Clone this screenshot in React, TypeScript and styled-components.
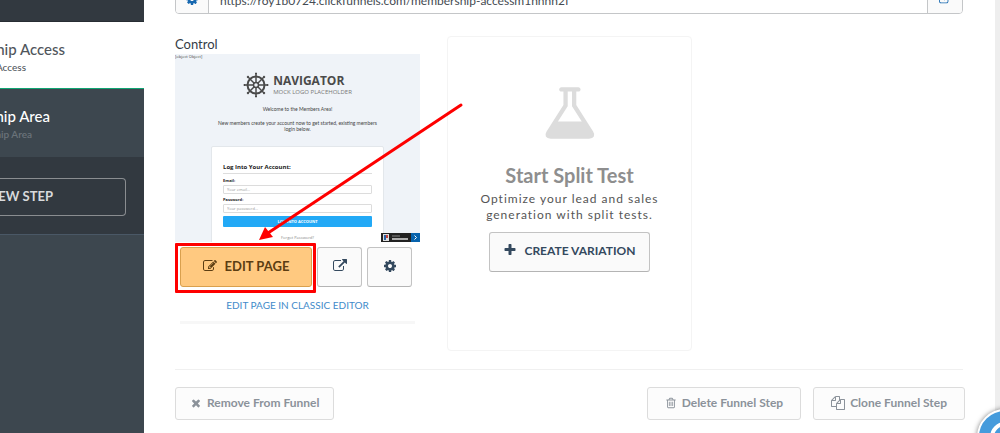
import React from "react";
import styled, { createGlobalStyle, css } from "styled-components";

const Global = createGlobalStyle`
  * { box-sizing: border-box; }
  html, body { margin: 0; padding: 0; overflow: hidden; }
  body { background: #fff; color: #3c4650; font-family: Lato, "Liberation Sans", sans-serif; font-size: 14px; }
  button, input { font-family: inherit; margin: 0; }
`;

const paths = {
  flask: "M1527 1447q56 89 21.5 153t-140.5 64h-1152q-106 0-140.5-64t21.5-153l503-793v-399h-64q-26 0-45-19t-19-45 19-45 45-19h512q26 0 45 19t19 45-19 45-45 19h-64v399zm-779-725l-272 430h712l-272-430-20-31v-436h-128v436z",
  external: "M1408 928v320q0 119-84.5 203.5t-203.5 84.5h-832q-119 0-203.5-84.5t-84.5-203.5v-832q0-119 84.5-203.5t203.5-84.5h704q14 0 23 9t9 23v64q0 14-9 23t-23 9h-704q-66 0-113 47t-47 113v832q0 66 47 113t113 47h832q66 0 113-47t47-113v-320q0-14 9-23t23-9h64q14 0 23 9t9 23zm384-864v512q0 26-19 45t-45 19-45-19l-176-176-652 652q-10 10-23 10t-23-10l-114-114q-10-10-10-23t10-23l652-652-176-176q-19-19-19-45t19-45 45-19h512q26 0 45 19t19 45z",
  cog: "M1152 896q0-106-75-181t-181-75-181 75-75 181 75 181 181 75 181-75 75-181zm512-109v222q0 12-8 23t-20 13l-185 28q-19 54-39 91 35 50 107 138 10 12 10 25t-9 23q-27 37-99 108t-94 71q-12 0-26-9l-138-108q-44 23-91 38-16 136-29 186-7 28-36 28h-222q-14 0-24.5-8.500t-11.500-21.500l-28-184q-49-16-90-37l-141 107q-10 9-25 9-14 0-25-11-126-114-165-168-7-10-7-23 0-12 8-23 15-21 51-66.500t54-70.500q-27-50-41-99l-183-27q-13-2-21-12.500t-8-23.500v-222q0-12 8-23t19-13l186-28q14-46 39-92-40-57-107-138-10-12-10-24 0-10 9-23 26-36 98.500-107.500t94.500-71.500q13 0 26 10l138 107q44-23 91-38 16-136 29-186 7-28 36-28h222q14 0 24.500 8.500t11.500 21.500l28 184q49 16 90 37l142-107q9-9 24-9 13 0 25 10 129 119 165 170 7 8 7 22 0 12-8 23-15 21-51 66.500t-54 70.500q26 50 41 98l183 28q13 2 21 12.500t8 23.500z",
  edit: "M888 1184l116-116-152-152-116 116v56h96v96h56zm440-720q-16-16-33 1l-350 350q-17 17-1 33t33-1l350-350q17-17 1-33zm80 594v190q0 119-84.5 203.500t-203.500 84.500h-832q-119 0-203.500-84.500t-84.500-203.500v-832q0-119 84.500-203.500t203.500-84.500h832q63 0 117 25 15 7 18 23 3 17-9 29l-49 49q-14 14-32 8-23-6-45-6h-832q-66 0-113 47t-47 113v832q0 66 47 113t113 47h832q66 0 113-47t47-113v-126q0-13 9-22l64-64q15-15 35-7t20 29zm-96-738l288 288-672 672h-288v-288zm444 132l-92 92-288-288 92-92q28-28 68-28t68 28l152 152q28 28 28 68t-28 68z",
  plus: "M1600 736v192q0 40-28 68t-68 28h-416v416q0 40-28 68t-68 28h-192q-40 0-68-28t-28-68v-416h-416q-40 0-68-28t-28-68v-192q0-40 28-68t68-28h416v-416q0-40 28-68t68-28h192q40 0 68 28t28 68v416h416q40 0 68 28t28 68z",
  times: "M1490 1322q0 40-28 68l-136 136q-28 28-68 28t-68-28l-294-294-294 294q-28 28-68 28t-68-28l-136-136q-28-28-28-68t28-68l294-294-294-294q-28-28-28-68t28-68l136-136q28-28 68-28t68 28l294 294 294-294q28-28 68-28t68 28l136 136q28 28 28 68t-28 68l-294 294 294 294q28 28 28 68z",
  trash: "M704 736v576q0 14-9 23t-23 9h-64q-14 0-23-9t-9-23v-576q0-14 9-23t23-9h64q14 0 23 9t9 23zm256 0v576q0 14-9 23t-23 9h-64q-14 0-23-9t-9-23v-576q0-14 9-23t23-9h64q14 0 23 9t9 23zm256 0v576q0 14-9 23t-23 9h-64q-14 0-23-9t-9-23v-576q0-14 9-23t23-9h64q14 0 23 9t9 23zm128 724v-948h-896v948q0 22 7 40.500t14.500 27 10.500 8.500h832q3 0 10.500-8.500t14.500-27 7-40.500zm-672-1076h448l-48-117q-7-9-17-11h-317q-10 2-17 11zm928 32v64q0 14-9 23t-23 9h-96v948q0 83-47 143.500t-113 60.500h-832q-66 0-113-58.500t-47-141.500v-952h-96q-14 0-23-9t-9-23v-64q0-14 9-23t23-9h309l70-167q15-37 54-63t79-26h320q40 0 79 26t54 63l70 167h309q14 0 23 9t9 23z",
  files: "M1696 384q40 0 68 28t28 68v1216q0 40-28 68t-68 28h-960q-40 0-68-28t-28-68v-288h-544q-40 0-68-28t-28-68v-672q0-40 20-88t48-76l408-408q28-28 76-48t88-20h416q40 0 68 28t28 68v328q68-40 128-40h416zm-544 213l-299 299h299v-299zm-640-384l-299 299h299v-299zm196 647l316-316v-416h-384v416q0 40-28 68t-68 28h-416v640h512v-256q0-40 20-88t48-76zm956 804v-1152h-384v416q0 40-28 68t-68 28h-416v640h896z",
};

const Icon = ({ name, size = 14 }: { name: keyof typeof paths; size?: number }) => (
  <svg width={size} height={size} viewBox="0 0 1792 1792" fill="currentColor" aria-hidden="true">
    <path d={paths[name]} />
  </svg>
);

const Page = styled.div`
  display: flex;
  min-height: 100vh;
`;

/* Sidebar */
const Sidebar = styled.aside`
  flex: 0 0 144px;
  display: flex;
  flex-direction: column;
  background: #3d474f;
`;
const SideTop = styled.div`
  height: 22px;
  background: #323940;
  border-bottom: 1px solid #272d33;
`;
const Step = styled.a<{ $active?: boolean }>`
  display: flex;
  flex-direction: column;
  height: ${(p) => (p.$active ? 67 : 68)}px;
  padding-top: 18px;
  overflow: hidden;
  text-decoration: none;
  color: ${(p) => (p.$active ? "#50565c" : "#fff")};
  background: ${(p) => (p.$active ? "#fff" : "#3d474f")};
  border-bottom: ${(p) => (p.$active ? "1px solid #0fa573" : "0")};
`;
const StepLine = styled.span<{ $end: number; $small?: boolean; $dim?: boolean }>`
  display: flex;
  justify-content: flex-end;
  width: ${(p) => p.$end}px;
  white-space: nowrap;
  font-size: ${(p) => (p.$small ? 10 : 15)}px;
  line-height: 18px;
  font-weight: ${(p) => (p.$dim ? 600 : 500)};
  color: ${(p) => (p.$dim ? "#6b737a" : "inherit")};
`;
const AddStep = styled.div`
  padding: 21px 18px 18px 0;
  background: #323940;
  border-bottom: 1px solid #4a5866;
`;
const AddButton = styled.button`
  display: flex;
  width: 100%;
  height: 38px;
  align-items: center;
  justify-content: flex-start;
  padding: 0 0 2px;
  background: transparent;
  border: 1px solid #8a8d90;
  border-left: 0;
  border-radius: 0 4px 4px 0;
  overflow: hidden;
  span {
    display: flex;
    justify-content: flex-end;
    width: 53px;
    white-space: nowrap;
    font-size: 13px;
    font-weight: 700;
    color: #d8dadc;
  }
`;

/* Main column */
const Main = styled.main`
  flex: 1;
  min-width: 0;
  padding: 0 30px 0 31px;
  border-right: 5px solid #eee;
`;
const UrlBar = styled.div`
  display: flex;
  height: 28px;
  margin: -14px 2px 0 0;
  border: 1px solid #c4c6c8;
  border-radius: 4px;
  overflow: hidden;
  color: #1768b0;
`;
const Addon = styled.button<{ $side: "left" | "right" }>`
  display: flex;
  flex: 0 0 ${(p) => (p.$side === "left" ? 33 : 35)}px;
  align-items: center;
  justify-content: center;
  padding: 0 0 2px;
  color: inherit;
  background: #fafafa;
  border: 0;
  ${(p) => (p.$side === "left" ? "border-right" : "border-left")}: 1px solid #c4c6c8;
`;
const UrlInput = styled.input`
  flex: 1;
  min-width: 0;
  padding: 0 11px;
  border: 0;
  font-size: 12px;
  color: #454b52;
`;
const Variants = styled.div`
  display: flex;
  align-items: flex-start;
  gap: 27px;
  padding-top: 22px;
`;
const Control = styled.section`
  position: relative;
  width: 245px;
`;
const ControlTitle = styled.h2`
  margin: 0;
  padding-bottom: 2px;
  font-size: 13px;
  font-weight: 400;
  line-height: 16px;
  color: #343c46;
`;

/* Page thumbnail */
const Preview = styled.div`
  position: relative;
  height: 188px;
  overflow: hidden;
  background: #eff3f8;
  font-family: "Open Sans", "Noto Sans", sans-serif;
  font-size: 4px;
  line-height: 6px;
  color: #444;
`;
const Stray = styled.div`
  font-size: 4px;
  line-height: 5px;
`;
const Brand = styled.div`
  display: flex;
  align-items: center;
  justify-content: center;
  gap: 4px;
  margin-top: 13px;
  color: #4a4a4a;
`;
const BrandText = styled.div`
  display: flex;
  flex-direction: column;
  strong { font-size: 12px; line-height: 14px; }
  span { font-size: 6px; line-height: 8px; color: #777; }
`;
const Welcome = styled.p`
  margin: 8px 40px 6px;
  text-align: center;
  font-family: Lato, sans-serif;
  font-size: 5px;
`;
const LoginCard = styled.div`
  display: flex;
  flex-direction: column;
  margin: 14px 36px 0;
  height: 110px;
  padding: 16px 11px 0;
  background: #fff;
  border: 1px solid #e3e7eb;
  border-radius: 2px;
`;
const LoginTitle = styled.h3`
  margin: 0 0 4px;
  padding-bottom: 2px;
  border-bottom: 1px solid #ddd;
  font-size: 6px;
  line-height: 8px;
  color: #222;
`;
const MiniLabel = styled.label`
  display: flex;
  flex-direction: column;
  gap: 1px;
  margin-bottom: 3px;
  font-weight: 700;
  color: #222;
`;
const MiniInput = styled.input`
  width: 100%;
  height: 9px;
  padding: 0 3px;
  border: 1px solid #dcdcdc;
  border-radius: 1px;
  font-size: 4px;
  &::placeholder { color: #999; }
`;
const MiniSubmit = styled.button`
  height: 11px;
  padding: 0;
  background: #22a9f6;
  border: 0;
  border-radius: 1px;
  font-size: 4px;
  font-weight: 700;
  color: #fff;
`;
const Forgot = styled.a`
  margin-top: 8px;
  text-align: center;
  text-decoration: none;
  color: #888;
`;
const Badge = styled.div`
  position: absolute;
  right: 0;
  bottom: 0;
  svg { display: block; }
`;

/* Buttons */
const Button = styled.button<{ $kind?: "primary" | "square" | "muted"; $pad?: number }>`
  display: inline-flex;
  align-items: center;
  justify-content: center;
  gap: 8px;
  height: 40px;
  padding: 0 13px 2px;
  background: #fafafa;
  border: 1px solid #c3c3c3;
  border-bottom-color: #b4b4b4;
  border-radius: 3px;
  font-size: 13px;
  font-weight: 700;
  white-space: nowrap;
  color: #34495e;
  ${(p) => p.$kind === "primary" && css`
    width: 132px;
    background: #ffc980;
    border-color: #d9a04e;
    color: #5c3d12;
  `}
  ${(p) => p.$kind === "square" && css`
    width: 45px;
    padding: 0 0 2px;
  `}
  ${(p) => p.$kind === "muted" && css`
    height: 33px;
    gap: 5px;
    padding: 0 ${p.$pad ?? 17}px 2px;
    border-color: #dcdcdc;
    background: #fcfcfc;
    font-size: 12px;
    color: #8b929a;
  `}
`;
const CreateButton = styled(Button)`
  gap: 7px;
  padding: 0 13px 4px;
  font-size: 12px;
  min-width: 161px;
`;
const Actions = styled.div`
  display: flex;
  gap: 5px;
  padding: 5px;
`;
const ClassicLink = styled.a`
  display: block;
  margin-top: 5px;
  text-align: center;
  font-size: 10px;
  line-height: 16px;
  text-decoration: none;
  color: #428bca;
`;
const CardFoot = styled.div`
  height: 3px;
  margin: 8px 5px 0;
  background: #f7f7f7;
`;
const Highlight = styled.div`
  position: absolute;
  left: 0;
  top: 207px;
  width: 141px;
  height: 50px;
  border: 3px solid #fe0000;
  border-radius: 1px;
  pointer-events: none;
`;
const Arrow = styled.svg`
  position: absolute;
  left: 80px;
  top: 64px;
  z-index: 1;
  pointer-events: none;
`;

/* Split test card */
const Split = styled.section`
  display: flex;
  flex-direction: column;
  align-items: center;
  width: 245px;
  height: 315px;
  padding-top: 46px;
  border: 1px solid #f4f4f4;
  border-radius: 4px;
  text-align: center;
  color: #dcdcdc;
`;
const FlaskBox = styled.div`
  display: flex;
  padding-left: 4px;
`;
const SplitTitle = styled.h2`
  margin: 20px 0 4px;
  font-size: 20px;
  line-height: 24px;
  color: #8e8e8e;
`;
const SplitText = styled.p`
  width: 190px;
  margin: 0 0 9px;
  font-size: 12px;
  line-height: 16px;
  letter-spacing: 1px;
  color: #555;
`;
const Rule = styled.hr`
  margin: 18px 2px 0 0;
  border: 0;
  border-top: 1px solid #f0f0f0;
`;
const Footer = styled.footer`
  display: flex;
  gap: 12px;
  padding-top: 17px;
`;
const Spacer = styled.div`
  flex: 1;
`;
const Chat = styled.button`
  position: fixed;
  right: -33px;
  bottom: -32px;
  display: flex;
  align-items: center;
  justify-content: center;
  width: 56px;
  height: 56px;
  padding: 0;
  background: #459bdc;
  border: 2px solid #fff;
  border-radius: 50%;
  box-shadow: 0 0 5px rgba(0, 0, 0, 0.5);
`;

const Helm = () => (
  <svg width="26" height="26" viewBox="0 0 26 26" fill="none" stroke="#4a4a4a" aria-hidden="true">
    <circle cx="13" cy="13" r="8.500" strokeWidth="2" />
    <circle cx="13" cy="13" r="2.500" strokeWidth="1.500" />
    {[0, 45, 90, 135, 180, 225, 270, 315].map((a) => (
      <g key={a} transform={`rotate(${a} 13 13)`}>
        <path d="M13 10.500V1" strokeWidth="1.500" />
        <path d="M12 1.500h2" strokeWidth="1.600" />
      </g>
    ))}
  </svg>
);

export default function App() {
  return (
    <>
      <Global />
      <Page>
        <Sidebar>
          <SideTop />
          <Step href="#access" $active>
            <StepLine $end={65}>hip Access</StepLine>
            <StepLine $end={26} $small>Access</StepLine>
          </Step>
          <Step href="#area">
            <StepLine $end={50}>hip Area</StepLine>
            <StepLine $end={32} $small $dim>hip Area</StepLine>
          </Step>
          <AddStep>
            <AddButton><span>NEW STEP</span></AddButton>
          </AddStep>
        </Sidebar>
        <Main>
          <UrlBar>
            <Addon $side="left" aria-label="Settings"><Icon name="cog" /></Addon>
            <UrlInput aria-label="Page URL" defaultValue="https://roy1b0724.clickfunnels.com/membership-accessm1hhhh2f" />
            <Addon $side="right" aria-label="Open page"><Icon name="external" size={12} /></Addon>
          </UrlBar>
          <Variants>
            <Control>
              <ControlTitle>Control</ControlTitle>
              <Preview>
                <Stray>[object Object]</Stray>
                <Brand>
                  <Helm />
                  <BrandText>
                    <strong>NAVIGATOR</strong>
                    <span>MOCK LOGO PLACEHOLDER</span>
                  </BrandText>
                </Brand>
                <Welcome>Welcome to the Members Area!</Welcome>
                <Welcome>New members create your account now to get started, existing members login below.</Welcome>
                <LoginCard>
                  <LoginTitle>Log Into Your Account:</LoginTitle>
                  <MiniLabel>Email:<MiniInput placeholder="Your email..." /></MiniLabel>
                  <MiniLabel>Password:<MiniInput placeholder="Your password..." /></MiniLabel>
                  <MiniSubmit>LOG INTO ACCOUNT</MiniSubmit>
                  <Forgot href="#forgot">Forgot Password?</Forgot>
                </LoginCard>
                <Badge>
                  <svg width="39" height="9" viewBox="0 0 39 9" aria-hidden="true">
                    <path fill="#222" d="M0 0h30v9H0z" />
                    <path fill="#0763ad" d="M30 0h9v9h-9z" />
                    <path fill="#ddd" d="M2 1h6v7H2z" />
                    <path fill="#2a62a5" d="M3 2h2v5H3z" />
                    <path fill="#c3423c" d="M5 2h2v3H5z" />
                    <path stroke="#888" d="M11 3h8" />
                    <path stroke="#ddd" strokeWidth="1.500" d="M11 6h16" />
                    <path stroke="#fff" fill="none" d="M33.500 2.500l2 2-2 2" />
                  </svg>
                </Badge>
              </Preview>
              <Actions>
                <Button $kind="primary"><Icon name="edit" />EDIT PAGE</Button>
                <Button $kind="square" aria-label="Open"><Icon name="external" /></Button>
                <Button $kind="square" aria-label="Settings"><Icon name="cog" /></Button>
              </Actions>
              <ClassicLink href="#classic">EDIT PAGE IN CLASSIC EDITOR</ClassicLink>
              <CardFoot />
              <Highlight />
              <Arrow width="212" height="144" viewBox="0 0 212 144" aria-hidden="true">
                <path d="M206 5L13 133" stroke="#fe0000" strokeWidth="3" strokeLinecap="round" />
                <path d="M4 140l6-13 8 10z" fill="#fe0000" />
              </Arrow>
            </Control>
            <Split>
              <FlaskBox><Icon name="flask" size={60} /></FlaskBox>
              <SplitTitle>Start Split Test</SplitTitle>
              <SplitText>Optimize your lead and sales generation with split tests.</SplitText>
              <CreateButton><Icon name="plus" />CREATE VARIATION</CreateButton>
            </Split>
          </Variants>
          <Rule />
          <Footer>
            <Button $kind="muted" $pad={14}><Icon name="times" size={12} />Remove From Funnel</Button>
            <Spacer />
            <Button $kind="muted"><Icon name="trash" size={12} />Delete Funnel Step</Button>
            <Button $kind="muted"><Icon name="files" size={14} />Clone Funnel Step</Button>
          </Footer>
        </Main>
      </Page>
      <Chat aria-label="Help">
        <svg width="34" height="34" viewBox="0 0 34 34" fill="none" aria-hidden="true">
          <circle cx="17" cy="17" r="13" stroke="#fff" strokeWidth="4" />
        </svg>
      </Chat>
    </>
  );
}
